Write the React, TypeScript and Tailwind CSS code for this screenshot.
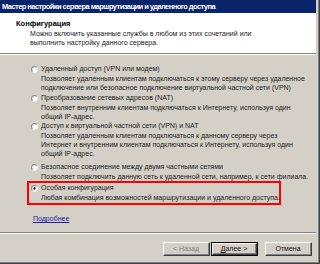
import React from "react";

const font = { fontFamily: '"Liberation Sans", Arial, sans-serif' };

function Radio({ checked = false }: { checked?: boolean }) {
  return (
    <svg width="7" height="7" viewBox="0 0 12 12" className="shrink-0">
      <circle cx="6" cy="6" r="5.5" fill="#ffffff" />
      <path d="M1.8 10.2 A5.5 5.5 0 0 1 10.2 1.8" stroke="#808080" strokeWidth="1" fill="none" />
      <path d="M2.6 9.4 A4.5 4.5 0 0 1 9.4 2.6" stroke="#404040" strokeWidth="1" fill="none" />
      {checked && <circle cx="6" cy="6" r="2" fill="#000000" />}
    </svg>
  );
}

function Option({
  label,
  lines,
  checked = false,
}: {
  label: string;
  lines: string[];
  checked?: boolean;
}) {
  return (
    <div className="flex flex-col">
      <div className="flex h-[10px] items-center gap-[3px]">
        <Radio checked={checked} />
        <span className="leading-[10px] whitespace-nowrap">{label}</span>
      </div>
      <div className="pl-[10px]">
        {lines.map((l) => (
          <div key={l} className="h-[9px] leading-[9px] whitespace-nowrap">
            {l}
          </div>
        ))}
      </div>
    </div>
  );
}

function Button({
  children,
  primary = false,
  disabled = false,
  className = "",
}: {
  children: React.ReactNode;
  primary?: boolean;
  disabled?: boolean;
  className?: string;
}) {
  return (
    <div
      className={`h-[14px] w-[47px] ${primary ? "border border-black" : ""} ${className}`}
    >
      <div className="flex h-full w-full border-t border-l border-white border-r border-b border-r-[#404040] border-b-[#404040]">
        <div
          className={`flex flex-1 items-center justify-center border-r border-b border-[#808080] text-[7px] leading-none ${
            disabled ? "text-[#808080]" : "text-[#111]"
          }`}
        >
          {children}
        </div>
      </div>
    </div>
  );
}

export default function App() {
  return (
    <div
      className="flex h-[264px] w-[320px] border-r border-b border-[#404040] bg-[#d4d0c8] text-[7px] text-[#1a1a1a]"
      style={font}
    >
      <div className="flex flex-1 border-r border-b border-[#808080] pr-[2px]">
        <div className="flex flex-1 flex-col">
          <div className="h-[13px] bg-[#0a246a] pl-[2px] text-[7.5px] leading-[13px] font-bold tracking-[-0.55px] whitespace-nowrap text-white">
            Мастер настройки сервера маршрутизации и удаленного доступа
          </div>

          <div className="h-[40px] bg-white pt-[7px] pl-[16px] text-[7px]">
            <div className="text-[7.5px] leading-[8.5px] font-bold text-black">Конфигурация</div>
            <div className="pl-[14px] leading-[9.5px]">
              <div>Можно включить указанные службы в любом из этих сочетаний или</div>
              <div>выполнить настройку данного сервера.</div>
            </div>
          </div>
          <div className="h-[1px] bg-[#808080]" />
          <div className="h-[1px] bg-white" />

          <div className="flex flex-1 flex-col pt-[9px] pl-[31px]">
            <Option
              label="Удаленный доступ (VPN или модем)"
              lines={[
                "Позволяет удаленным клиентам подключаться к этому серверу через удаленное",
                "подключение или безопасное подключение виртуальной частной сети (VPN)",
              ]}
            />
            <div className="mt-[1px]">
              <Option
                label="Преобразование сетевых адресов (NAT)"
                lines={[
                  "Позволяет внутренним клиентам подключаться к Интернету, используя один",
                  "общий IP-адрес.",
                ]}
              />
            </div>
            <Option
              label="Доступ к виртуальной частной сети (VPN) и NAT"
              lines={[
                "Позволяет удаленным клиентам подключаться к данному серверу через",
                "Интернет и внутренним клиентам подключаться к Интернету, используя один",
                "общий IP-адрес.",
              ]}
            />
            <div className="mt-[4px]">
              <Option
                label="Безопасное соединение между двумя частными сетями"
                lines={["Позволяет подключить данную сеть к удаленной сети, например, к сети филиала."]}
              />
            </div>
            <div className="ml-[-4px] w-[254px] border-2 border-[#ff0000] pt-0 pb-[1px] pl-[2px]">
              <Option
                checked
                label="Особая конфигурация"
                lines={["Любая комбинация возможностей маршрутизации и удаленного доступа."]}
              />
            </div>
            <div className="mt-[9px] ml-[2px] h-[10px] leading-[10px]">
              <span className="text-[#1c1ca8] underline">Подробнее</span>
            </div>
          </div>

          <div className="h-[1px] bg-[#808080]" />
          <div className="h-[1px] bg-white" />

          <div className="flex h-[28px] items-start justify-end pt-[8px] pr-[4px]">
            <Button disabled>&lt; Назад</Button>
            <Button primary className="ml-[1px]">
              <span>
                <span className="underline">Д</span>алее &gt;
              </span>
            </Button>
            <Button className="ml-[7px]">Отмена</Button>
          </div>
        </div>
      </div>
    </div>
  );
}
